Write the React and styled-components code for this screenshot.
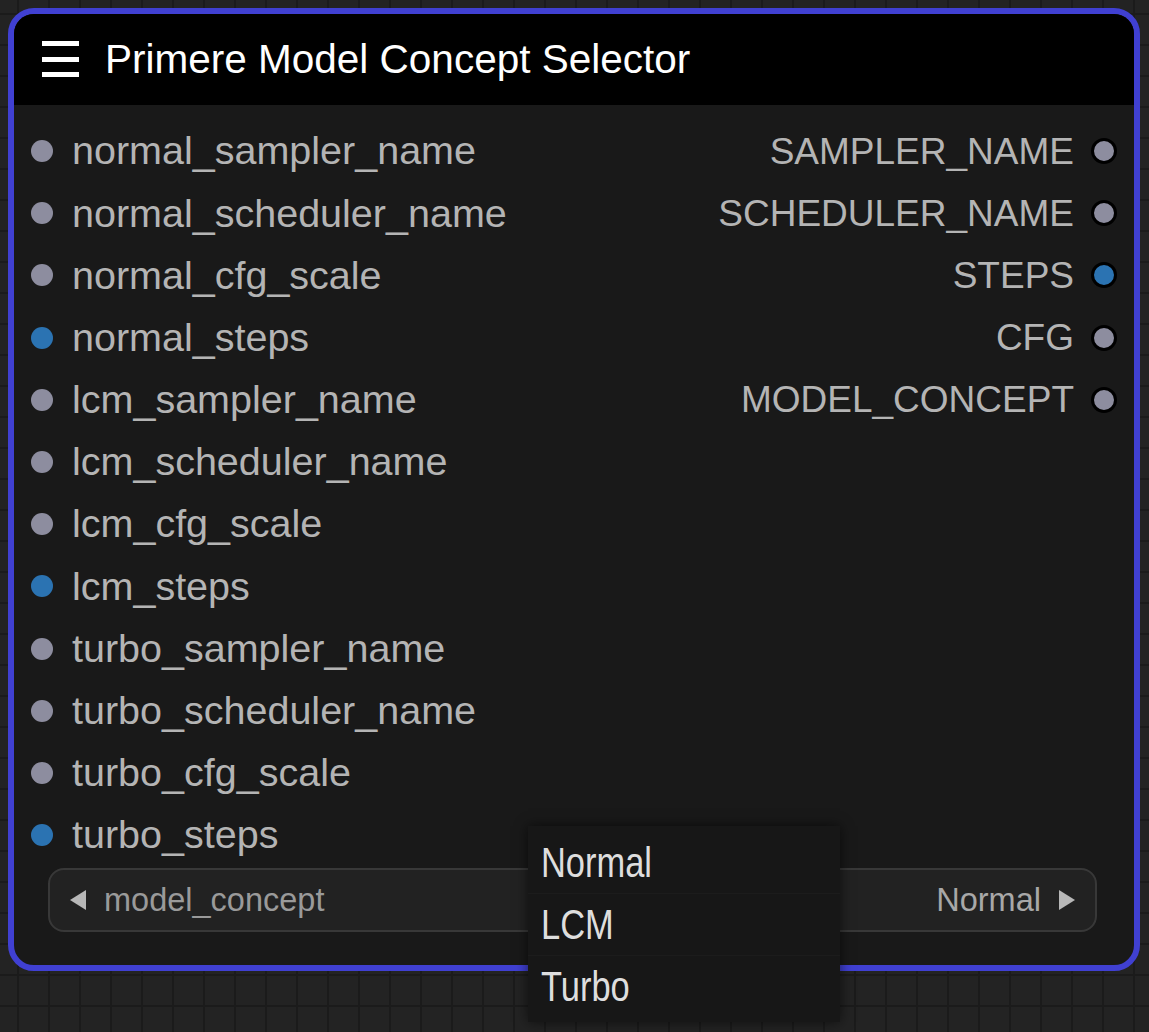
import React from "react";
import styled, { createGlobalStyle } from "styled-components";

const Global = createGlobalStyle`
  html, body { margin: 0; padding: 0; }
  body {
    width: 1149px;
    height: 1032px;
    overflow: hidden;
    background-color: #232323;
    background-image:
      linear-gradient(to right, #1b1b1b 2px, transparent 2px),
      linear-gradient(to bottom, #1b1b1b 2px, transparent 2px);
    background-size: 31px 31px;
    background-position: 17px 13px;
    font-family: "Liberation Sans", Arial, sans-serif;
  }
`;

const Canvas = styled.div`
  position: relative;
  width: 1149px;
  height: 1032px;
  padding: 8px 0 0 8px;
  box-sizing: border-box;
`;

const Node = styled.div`
  width: 1132px;
  height: 963px;
  box-sizing: border-box;
  border: 6px solid #4040d2;
  border-radius: 26px;
  background: #191919;
  overflow: hidden;
  display: flex;
  flex-direction: column;
`;

const TitleBar = styled.div`
  height: 91px;
  flex: none;
  background: #000;
  display: flex;
  align-items: center;
  padding-left: 28px;
  gap: 26px;
`;

const Title = styled.div`
  color: #fff;
  font-size: 40.5px;
  line-height: 1;
`;

const Body = styled.div`
  flex: 1;
  display: flex;
  flex-direction: column;
  padding: 15px 17px 0 17px;
`;

const Slots = styled.div`
  display: grid;
  grid-template-columns: 1fr auto;
`;

const Column = styled.div`
  display: flex;
  flex-direction: column;
  align-items: ${(p) => (p.$right ? "flex-end" : "flex-start")};
`;

const Slot = styled.div`
  height: 62.2px;
  display: flex;
  align-items: center;
  gap: ${(p) => (p.$right ? "17px" : "19px")};
  flex-direction: ${(p) => (p.$right ? "row-reverse" : "row")};
`;

const Dot = styled.span`
  width: ${(p) => (p.$outline ? "26px" : "22px")};
  height: ${(p) => (p.$outline ? "26px" : "22px")};
  border-radius: 50%;
  background: ${(p) => (p.$blue ? "#2b73b2" : "#8d8d9f")};
  box-sizing: border-box;
  border: ${(p) => (p.$outline ? "3px solid #000" : "none")};
  flex: none;
`;

const Label = styled.span`
  color: #b4b4b4;
  font-size: ${(p) => (p.$right ? "37px" : "39.5px")};
  line-height: 1;
  white-space: nowrap;
`;

const Combo = styled.div`
  margin: 2px 20px 0 17px;
  height: 64px;
  box-sizing: border-box;
  border: 2px solid #383838;
  border-radius: 16px;
  background: #222;
  display: flex;
  align-items: center;
  padding: 0 20px;
  gap: 18px;
  color: #9a9a9a;
  font-size: 32.5px;
`;

const Arrow = styled.span`
  width: 0;
  height: 0;
  border-top: 10px solid transparent;
  border-bottom: 10px solid transparent;
  ${(p) =>
    p.$right
      ? "border-left: 16px solid #b8b8b8;"
      : "border-right: 16px solid #b8b8b8;"}
`;

const ComboLabel = styled.span`
  flex: 1;
  line-height: 1;
`;

const ComboValue = styled.span`
  color: #a8a8a8;
  line-height: 1;
`;

const Menu = styled.div`
  position: absolute;
  left: 528px;
  top: 826px;
  width: 312px;
  height: 196px;
  background: #171717;
  box-shadow: 0 0 12px rgba(0, 0, 0, 0.6);
  display: flex;
  flex-direction: column;
  padding-top: 6px;
  box-sizing: border-box;
`;

const MenuItem = styled.div`
  height: 62px;
  display: flex;
  align-items: center;
  padding-left: 13px;
  border-bottom: ${(p) => (p.$last ? "none" : "1px solid #1c1c1c")};
  box-sizing: border-box;
`;

const MenuText = styled.span`
  display: inline-block;
  color: #dedede;
  font-size: 42px;
  line-height: 1;
  transform: scaleX(0.82);
  transform-origin: left center;
`;

const inputs = [
  ["normal_sampler_name", false],
  ["normal_scheduler_name", false],
  ["normal_cfg_scale", false],
  ["normal_steps", true],
  ["lcm_sampler_name", false],
  ["lcm_scheduler_name", false],
  ["lcm_cfg_scale", false],
  ["lcm_steps", true],
  ["turbo_sampler_name", false],
  ["turbo_scheduler_name", false],
  ["turbo_cfg_scale", false],
  ["turbo_steps", true],
];

const outputs = [
  ["SAMPLER_NAME", false],
  ["SCHEDULER_NAME", false],
  ["STEPS", true],
  ["CFG", false],
  ["MODEL_CONCEPT", false],
];

const Hamburger = () => (
  <svg width="37" height="38" viewBox="0 0 37 38">
    <rect x="0" y="0" width="37" height="5" fill="#fff" />
    <rect x="0" y="16" width="37" height="5" fill="#fff" />
    <rect x="0" y="31" width="37" height="5" fill="#fff" />
  </svg>
);

export default function App() {
  return (
    <>
      <Global />
      <Canvas>
        <Node>
          <TitleBar>
            <Hamburger />
            <Title>Primere Model Concept Selector</Title>
          </TitleBar>
          <Body>
            <Slots>
              <Column>
                {inputs.map(([name, blue]) => (
                  <Slot key={name}>
                    <Dot $blue={blue} />
                    <Label>{name}</Label>
                  </Slot>
                ))}
              </Column>
              <Column $right>
                {outputs.map(([name, blue]) => (
                  <Slot key={name} $right>
                    <Dot $blue={blue} $outline />
                    <Label $right>{name}</Label>
                  </Slot>
                ))}
              </Column>
            </Slots>
            <Combo>
              <Arrow />
              <ComboLabel>model_concept</ComboLabel>
              <ComboValue>Normal</ComboValue>
              <Arrow $right />
            </Combo>
          </Body>
        </Node>
        <Menu>
          <MenuItem><MenuText>Normal</MenuText></MenuItem>
          <MenuItem><MenuText>LCM</MenuText></MenuItem>
          <MenuItem $last><MenuText>Turbo</MenuText></MenuItem>
        </Menu>
      </Canvas>
    </>
  );
}
